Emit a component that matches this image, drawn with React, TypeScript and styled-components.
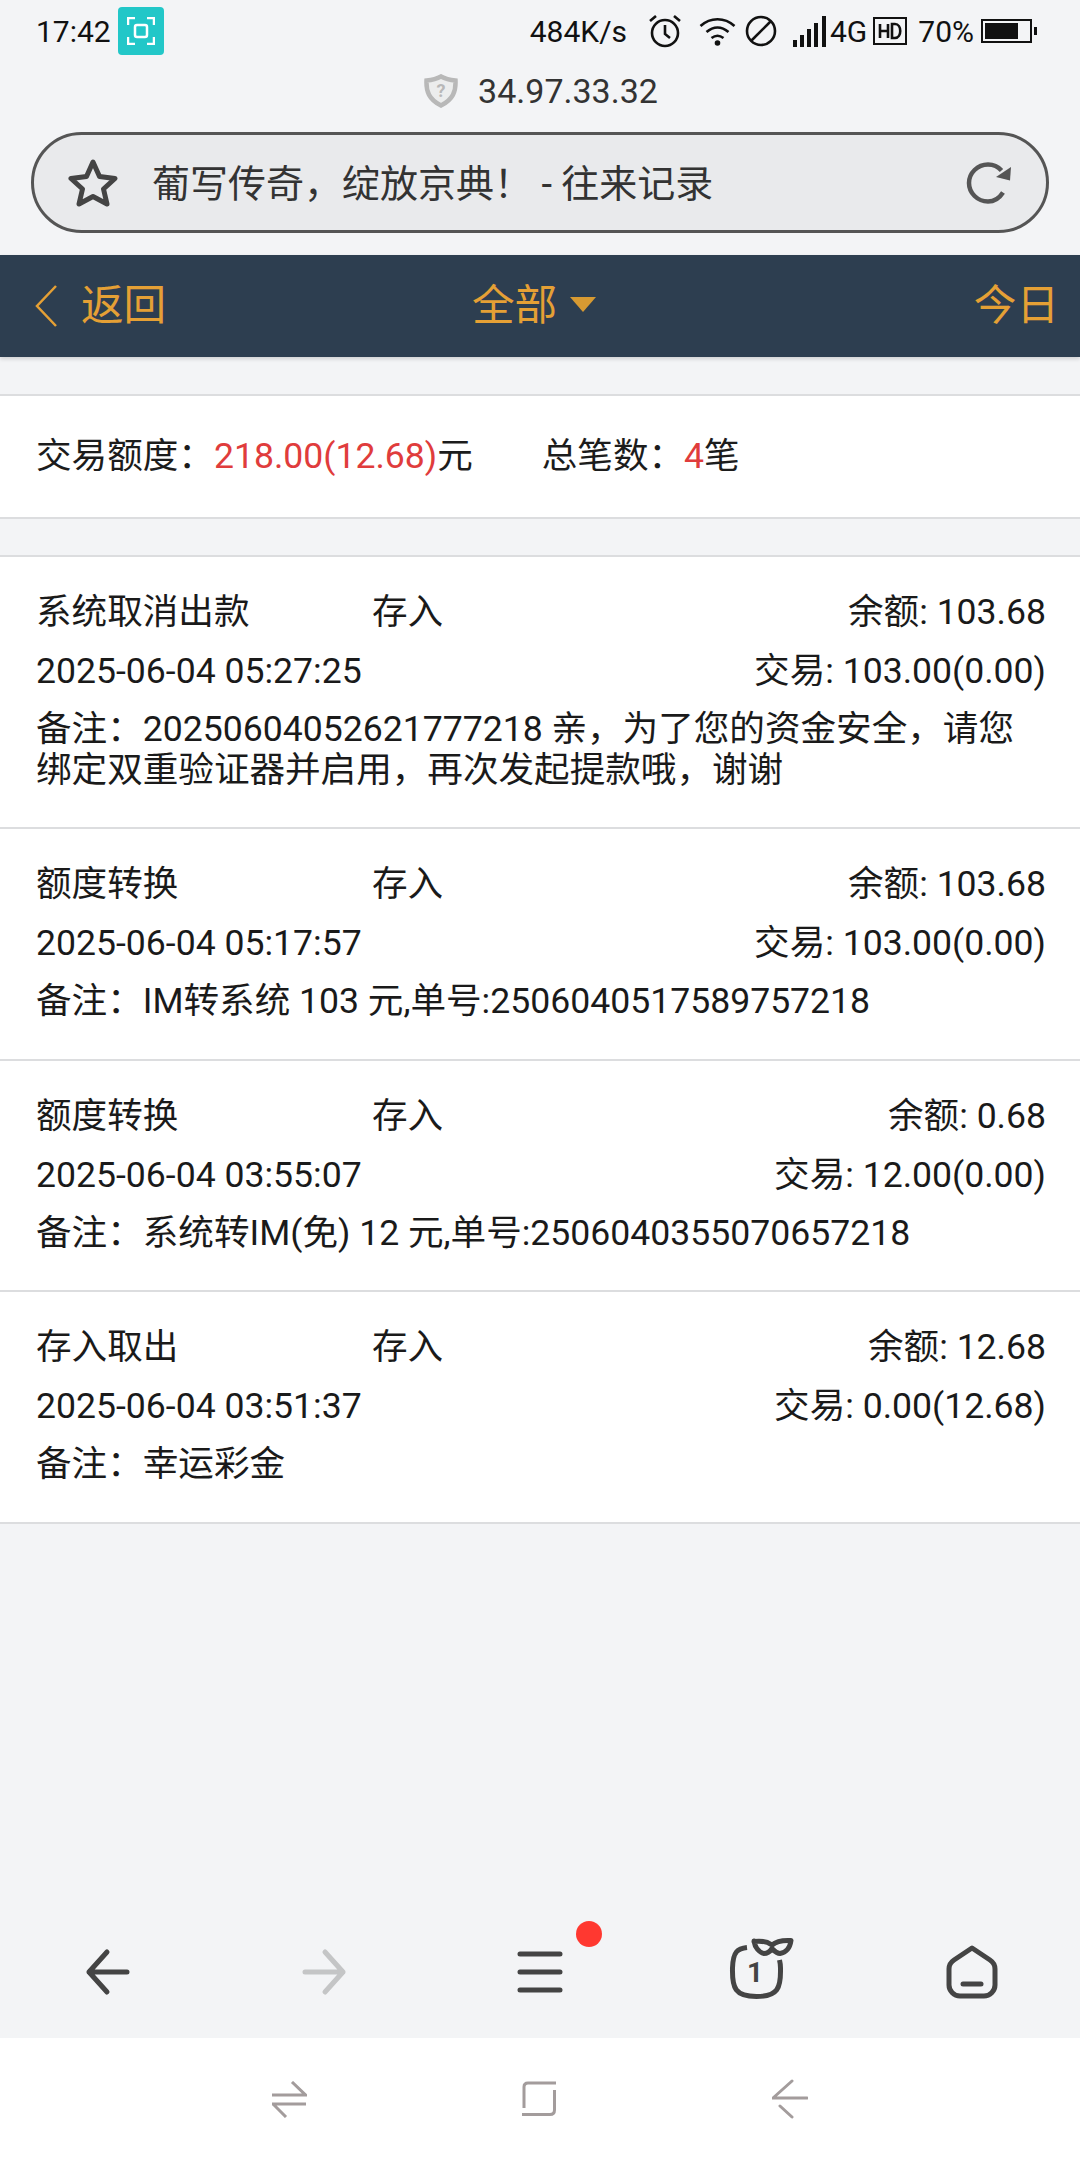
import React from "react";
import styled, { createGlobalStyle } from "styled-components";

const FONT = `Roboto, "Noto Sans CJK SC", sans-serif`;

const GlobalStyle = createGlobalStyle`
  html, body {
    margin: 0;
    padding: 0;
    background: #f3f4f6;
    font-family: ${FONT};
  }
  * { box-sizing: border-box; }
`;

const Screen = styled.div`
  width: 1080px;
  height: 2160px;
  display: flex;
  flex-direction: column;
  background: #f3f4f6;
  overflow: hidden;
`;

const StatusBar = styled.div`
  height: 62px;
  padding: 0 43px 0 36px;
  display: flex;
  align-items: center;
  justify-content: space-between;
  font-size: 30px;
  color: #111;
`;

const StatusGroup = styled.div`
  display: flex;
  align-items: center;
`;

const Slot = styled.span<{ $left?: number }>`
  display: flex;
  align-items: center;
  margin-left: ${(p) => p.$left ?? 0}px;
`;

const CaptureBadge = styled.div`
  width: 46px;
  height: 48px;
  margin-left: 7px;
  border-radius: 4px;
  background: #22c7c8;
  display: flex;
  align-items: center;
  justify-content: center;
`;

const HostRow = styled.div`
  height: 58px;
  padding-left: 2px;
  display: flex;
  align-items: center;
  justify-content: center;
  gap: 20px;
  font-size: 34px;
  color: #333;
`;

const AddressBar = styled.div`
  margin: 12px 31px 0 31px;
  height: 101px;
  border: 3px solid #555;
  border-radius: 51px;
  background: #e9eaec;
  display: flex;
  align-items: center;
  padding: 0 34px 0 34px;
  color: #333;
  font-size: 38px;
`;

const PageTitle = styled.div`
  flex: 1;
  margin-left: 34px;
  padding-bottom: 5px;
`;

const NavBar = styled.div`
  margin-top: 22px;
  height: 102px;
  background: #2d3e50;
  color: #e5a035;
  font-size: 42.6px;
  display: grid;
  grid-template-columns: 438px auto 1fr;
  align-items: center;
  padding: 0 21px 0 34px;
  box-shadow: 0 2px 4px rgba(0, 0, 0, 0.15);
`;

const NavItem = styled.div<{ $gap?: number; $end?: boolean }>`
  display: flex;
  align-items: center;
  gap: ${(p) => p.$gap ?? 0}px;
  justify-content: ${(p) => (p.$end ? "flex-end" : "flex-start")};
`;

const NavLabel = styled.span`
  margin-bottom: 10px;
`;

const Caret = styled.span`
  width: 0;
  height: 0;
  margin-bottom: 4px;
  border-left: 13px solid transparent;
  border-right: 13px solid transparent;
  border-top: 15px solid #d79a32;
`;

const Panel = styled.section`
  background: #fff;
  border-top: 2px solid #dcdddf;
  border-bottom: 2px solid #dcdddf;
`;

const Summary = styled(Panel)`
  margin-top: 37px;
  height: 125px;
  padding: 0 36px 8px;
  display: flex;
  align-items: center;
  gap: 69px;
  font-size: 35.6px;
  color: #1c1c1c;
`;

const Red = styled.span`
  color: #e03c3c;
`;

const Records = styled(Panel)`
  margin-top: 36px;
  border-bottom: 0;
`;

const Record = styled.div`
  padding: 26px 34px 36.4px 36px;
  border-bottom: 2px solid #dcdddf;
  font-size: 35.6px;
  line-height: 41px;
  color: #1a1a1a;
`;

const RecordRow = styled.div`
  display: flex;
  justify-content: space-between;
  height: 59px;
  align-items: center;
`;

const RecordLeft = styled.div`
  display: flex;
`;

const RecordType = styled.span`
  width: 336px;
`;

const Note = styled.div`
  margin-top: 8px;
`;

const BottomBar = styled.div`
  margin-top: auto;
  height: 132px;
  display: grid;
  grid-template-columns: repeat(5, 1fr);
  align-items: center;
  justify-items: center;
`;

const ToolButton = styled.div`
  position: relative;
  display: flex;

  svg {
    overflow: visible;
  }
`;

const Dot = styled.span`
  position: absolute;
  top: -29px;
  right: -39px;
  width: 26px;
  height: 26px;
  border-radius: 50%;
  background: #ff3830;
`;

const SystemBar = styled.div`
  height: 122px;
  background: #fff;
  display: flex;
  align-items: center;
  justify-content: center;
  gap: 215px;
`;

const records = [
  {
    type: "系统取消出款",
    balance: "余额: 103.68",
    time: "2025-06-04 05:27:25",
    amount: "交易: 103.00(0.00)",
    note: "备注：20250604052621777218 亲，为了您的资金安全，请您绑定双重验证器并启用，再次发起提款哦，谢谢",
  },
  {
    type: "额度转换",
    balance: "余额: 103.68",
    time: "2025-06-04 05:17:57",
    amount: "交易: 103.00(0.00)",
    note: "备注：IM转系统 103 元,单号:2506040517589757218",
  },
  {
    type: "额度转换",
    balance: "余额: 0.68",
    time: "2025-06-04 03:55:07",
    amount: "交易: 12.00(0.00)",
    note: "备注：系统转IM(免) 12 元,单号:2506040355070657218",
  },
  {
    type: "存入取出",
    balance: "余额: 12.68",
    time: "2025-06-04 03:51:37",
    amount: "交易: 0.00(12.68)",
    note: "备注：幸运彩金",
  },
];

const App = () => (
  <Screen>
    <GlobalStyle />
    <StatusBar>
      <StatusGroup>
        <span>17:42</span>
        <CaptureBadge>
          <svg width="28" height="28" viewBox="0 0 28 28" fill="none" stroke="#fff" strokeWidth="2.5">
            <path d="M1 8V1h7M20 1h7v7M27 20v7h-7M8 27H1v-7" />
            <rect x="8" y="8" width="12" height="12" rx="2" />
          </svg>
        </CaptureBadge>
      </StatusGroup>
      <StatusGroup>
        <span>484K/s</span>
        <Slot $left={21}>
          <svg width="34" height="34" viewBox="0 0 34 34" fill="none" stroke="#111" strokeWidth="2.6">
            <circle cx="17" cy="19" r="13" />
            <path d="M17 11v9l5 4M2 7l6-5M32 7l-6-5" />
          </svg>
        </Slot>
        <Slot $left={17}>
          <svg width="37" height="29" viewBox="0 0 37 29" fill="none" stroke="#111" strokeWidth="2.6">
            <path d="M1.5 9c10-9 24-9 34 0M7.5 15c7-6 15-6 22 0M12.5 21c4-3 8-3 12 0" />
            <circle cx="18.5" cy="26" r="2.8" fill="#111" stroke="none" />
          </svg>
        </Slot>
        <Slot $left={9}>
          <svg width="32" height="32" viewBox="0 0 32 32" fill="none" stroke="#111" strokeWidth="2.6">
            <circle cx="16" cy="16" r="14" />
            <path d="M6 26 26 6" />
          </svg>
        </Slot>
        <Slot $left={16}>
          <svg width="33" height="31" viewBox="0 0 33 31" fill="#111">
            <rect x="0" y="24" width="4" height="7" />
            <rect x="7" y="19" width="4" height="12" />
            <rect x="14" y="13" width="4" height="18" />
            <rect x="21" y="7" width="4" height="24" />
            <rect x="29" y="0" width="4" height="31" />
          </svg>
        </Slot>
        <Slot $left={4}>4G</Slot>
        <Slot $left={6}>
          <svg width="34" height="28" viewBox="0 0 34 28" fill="none" stroke="#111" strokeWidth="2">
            <rect x="1" y="1" width="32" height="26" />
            <path d="M7 7v14M15 7v14M7 14h8M19 7v14h3c7 0 7-14 0-14z" strokeWidth="2.6" />
          </svg>
        </Slot>
        <Slot $left={11}>70%</Slot>
        <Slot $left={7}>
          <svg width="56" height="24" viewBox="0 0 56 24">
            <rect x="1" y="1" width="49" height="22" fill="none" stroke="#111" strokeWidth="2" />
            <rect x="4" y="4" width="33" height="16" fill="#111" />
            <rect x="53" y="8" width="3" height="8" fill="#111" />
          </svg>
        </Slot>
      </StatusGroup>
    </StatusBar>

    <HostRow>
      <svg width="34" height="34" viewBox="0 0 34 34">
        <path d="M17 2.5c4.5 2.5 9 3.5 14.5 4 .5 11-2.5 19-14.500 25C5 25.500 2 17.500 2.500 6.500 8 6 12.500 5 17 2.500z" fill="#eceded" stroke="#b8b8b8" strokeWidth="4.5" />
        <text x="17" y="23" textAnchor="middle" fontSize="18" fontFamily="Roboto" fontWeight="700" fill="#b8b8b8">?</text>
      </svg>
      <span>34.97.33.32</span>
    </HostRow>

    <AddressBar>
      <svg width="50" height="48" viewBox="0 0 50 48" fill="none" stroke="#444" strokeWidth="5" strokeLinejoin="round">
        <path d="M25 3l6.500 14.500L47 19.500 35.500 30 39 45l-14-7.500L11 45l3.500-15L3 19.500l15.500-2z" />
      </svg>
      <PageTitle>葡写传奇，绽放京典！ - 往来记录</PageTitle>
      <svg width="46" height="42" viewBox="0 0 46 42" fill="none">
        <path d="M37 30.500C33.500 36 28 39.500 22 39.500 11.500 39.500 3 31 3 21S11.500 2.500 22 2.500c5.500 0 10 2 13.500 6" stroke="#555" strokeWidth="4.500" />
        <path d="M45 5 44 18.500 30 15z" fill="#555" />
      </svg>
    </AddressBar>

    <NavBar>
      <NavItem $gap={23}>
        <svg width="24" height="42" viewBox="0 0 24 42" fill="none" stroke="#e5a035" strokeWidth="2.500">
          <path d="M22 1 3 21l19 20" />
        </svg>
        <NavLabel>返回</NavLabel>
      </NavItem>
      <NavItem $gap={13}>
        <NavLabel>全部</NavLabel>
        <Caret />
      </NavItem>
      <NavItem $end>
        <NavLabel>今日</NavLabel>
      </NavItem>
    </NavBar>

    <Summary>
      <span>
        交易额度：<Red>218.00(12.68)</Red>元
      </span>
      <span>
        总笔数：<Red>4</Red>笔
      </span>
    </Summary>

    <Records>
      {records.map((r) => (
        <Record key={r.time}>
          <RecordRow>
            <RecordLeft>
              <RecordType>{r.type}</RecordType>
              <span>存入</span>
            </RecordLeft>
            <span>{r.balance}</span>
          </RecordRow>
          <RecordRow>
            <span>{r.time}</span>
            <span>{r.amount}</span>
          </RecordRow>
          <Note>{r.note}</Note>
        </Record>
      ))}
    </Records>

    <BottomBar>
      <ToolButton>
        <svg width="44" height="46" viewBox="0 0 44 46" fill="none" stroke="#444" strokeWidth="5" strokeLinecap="round" strokeLinejoin="round">
          <path d="M21 3 3 23l18 20M3 23h38" />
        </svg>
      </ToolButton>
      <ToolButton>
        <svg width="44" height="46" viewBox="0 0 44 46" fill="none" stroke="#c4c5c6" strokeWidth="5" strokeLinecap="round" strokeLinejoin="round">
          <path d="M23 3l18 20-18 20M41 23H3" />
        </svg>
      </ToolButton>
      <ToolButton>
        <svg width="46" height="44" viewBox="0 0 46 44" fill="none" stroke="#444" strokeWidth="5" strokeLinecap="round">
          <path d="M3 4h40M3 22h40M3 40h40" />
        </svg>
        <Dot />
      </ToolButton>
      <ToolButton>
        <svg width="53" height="53" viewBox="0 8 53 53" fill="none" stroke="#444" strokeWidth="5">
          <path d="M17 9.500C8 10.500 3 13 2.500 30c-.5 20 2.500 28.500 24 28.500s24.500-8.500 24-28.500c0-4-.5-6-1-8" />
          <path d="M24 3.500c7-1 13 0 18 3.500 4-3.500 11-5 19-4.500-1 7-5 12-11 13-4 0-6-3-8-5-2 3-5 5-8 5-5-1-9-6-10-12.500z" strokeWidth="5" strokeLinejoin="round" />
          <text x="25" y="44" textAnchor="middle" fontSize="28" fontFamily="Roboto" fontWeight="700" fill="#444" stroke="none">1</text>
        </svg>
      </ToolButton>
      <ToolButton>
        <svg width="52" height="54" viewBox="0 0 52 54" fill="none" stroke="#444" strokeWidth="5" strokeLinecap="round" strokeLinejoin="round">
          <path d="M26 3 8 15c-3 2-5 5-5 9v16c0 6 5 11 11 11h24c6 0 11-5 11-11V24c0-4-2-7-5-9z" />
          <path d="M17 39h18" />
        </svg>
      </ToolButton>
    </BottomBar>

    <SystemBar>
      <svg width="35" height="37" viewBox="0 0 35 37" fill="none" stroke="#a39c9c" strokeWidth="3">
        <path d="M20 1l13.500 13H0M0 23h34M1 23l13 13" />
      </svg>
      <svg width="35" height="36" viewBox="0 0 35 36" fill="none" stroke="#a39c9c" strokeWidth="3">
        <path d="M2 27V6Q2 2 6 2H34M32.500 9V29Q32.500 33.500 28 33.500H0" />
      </svg>
      <svg width="36" height="40" viewBox="0 0 36 40" fill="none" stroke="#a39c9c" strokeWidth="3" strokeLinecap="round">
        <path d="M20 2 1 19h34M8 27l12 11" />
      </svg>
    </SystemBar>
  </Screen>
);

export default App;
